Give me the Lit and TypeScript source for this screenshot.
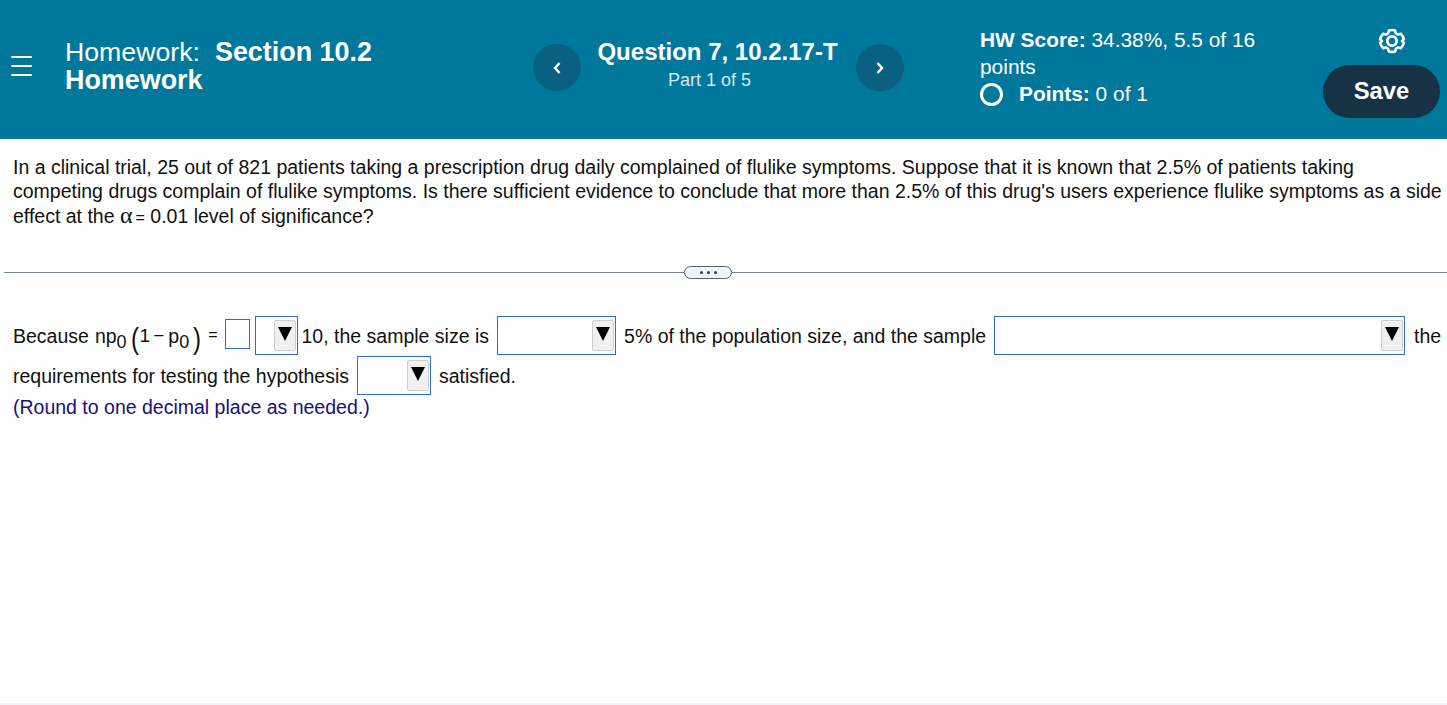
import { LitElement, html, css } from 'lit';
import { customElement } from 'lit/decorators.js';

@customElement('drop-down')
class DropDown extends LitElement {
  static properties = { width: { type: Number } };
  declare width: number;

  static styles = css`
    :host {
      display: block;
      flex: none;
      margin-bottom: 2px;
    }
    .box {
      box-sizing: border-box;
      height: 39px;
      border: 1px solid #2b6cd4;
      background: #fff;
      display: flex;
      justify-content: flex-end;
      padding: 3px 1px 0 0;
    }
    .btn {
      box-sizing: border-box;
      width: 22px;
      height: 31px;
      border: 1px solid #cfcfcf;
      border-radius: 2px;
      background: #f0f0f0;
      display: flex;
      justify-content: center;
      padding-top: 6px;
    }
    svg {
      display: block;
    }
  `;

  render() {
    return html`
      <div class="box" style="width:${this.width}px">
        <div class="btn">
          <svg width="14" height="14" viewBox="0 0 14 14"><path d="M0 0H14L7 14Z" fill="#000" /></svg>
        </div>
      </div>
    `;
  }
}

@customElement('app-root')
class AppRoot extends LitElement {
  static styles = css`
    :host {
      display: block;
      height: 705px;
      overflow: hidden;
      font-family: 'Liberation Sans', Arial, sans-serif;
      color: #111;
      background: #fff;
      box-shadow: inset 0 -2px 0 #f1f3f5;
    }
    header {
      height: 139px;
      background: #00789c;
      color: #fff;
      display: flex;
      box-sizing: border-box;
    }
    .menu {
      width: 65px;
      flex: none;
      padding: 56px 0 0 11px;
      box-sizing: border-box;
    }
    .menu span {
      display: block;
      width: 21px;
      height: 2px;
      background: #fff;
      margin-bottom: 7px;
      border-radius: 1px;
    }
    .title {
      width: 468px;
      flex: none;
      padding-top: 39px;
      font-size: 26.7px;
      line-height: 27.5px;
    }
    .title b {
      font-size: 26.9px;
      margin-left: 15px;
    }
    .title b.second {
      margin-left: 0;
    }
    .nav {
      width: 371px;
      flex: none;
      display: flex;
      align-items: flex-start;
      padding-top: 44px;
      box-sizing: border-box;
    }
    .circle {
      width: 48px;
      height: 47px;
      flex: none;
      border-radius: 50%;
      background: #0a6080;
      display: flex;
      align-items: center;
      justify-content: center;
    }
    .question {
      flex: 1;
      text-align: center;
      margin-top: -7px;
    }
    .question b {
      display: block;
      font-size: 24px;
      line-height: 30px;
      margin-right: 2px;
    }
    .question span {
      display: block;
      font-size: 18px;
      line-height: 26px;
      color: #d4e8ef;
      margin-right: 18px;
    }
    .score {
      margin-left: 76px;
      width: 343px;
      flex: none;
      padding-top: 26px;
      font-size: 20.9px;
      line-height: 27px;
    }
    .score .text {
      width: 290px;
    }
    .points {
      display: flex;
      align-items: center;
      gap: 16px;
    }
    .ring {
      width: 23px;
      height: 23px;
      box-sizing: border-box;
      border: 3px solid #fff;
      border-radius: 50%;
      margin-top: 1px;
    }
    .actions {
      flex: none;
      width: 117px;
      display: flex;
      flex-direction: column;
      padding-top: 27px;
    }
    .gear {
      margin-left: 55px;
      display: block;
    }
    .save {
      margin-top: 10px;
      width: 117px;
      height: 53px;
      border-radius: 27px;
      background: #173245;
      font-size: 23.8px;
      font-weight: 700;
      display: flex;
      align-items: center;
      justify-content: center;
      padding-bottom: 1px;
      box-sizing: border-box;
    }
    .prompt {
      padding: 15.8px 0 0 13px;
      font-size: 19.5px;
      line-height: 24.5px;
      white-space: nowrap;
    }
    .alpha {
      font-family: 'Liberation Serif', serif;
      font-size: 24px;
      line-height: 0;
    }
    .tight {
      font-size: 16px;
      margin-left: 3px;
    }
    .divider {
      margin: 36.200px 0 0 4px;
      display: flex;
      align-items: center;
    }
    .divider i {
      flex: 1;
      height: 1px;
      background: #77839a;
    }
    .divider i.left {
      flex: none;
      width: 680px;
    }
    .pill {
      box-sizing: border-box;
      width: 48px;
      height: 13px;
      border: 1px solid #56657a;
      border-radius: 7px;
      background: #f1f3f6;
      display: flex;
      align-items: center;
      justify-content: center;
      gap: 4px;
    }
    .pill span {
      width: 3px;
      height: 3px;
      border-radius: 50%;
      background: #333e4e;
    }
    .answer {
      padding: 37px 0 0 13px;
      font-size: 19.5px;
      white-space: nowrap;
    }
    .line {
      display: flex;
      align-items: center;
      height: 40px;
    }
    .expr {
      display: flex;
      align-items: center;
      margin-left: 6px;
    }
    sub {
      font-size: 18px;
      line-height: 0;
      vertical-align: -5px;
    }
    .paren {
      font-size: 30px;
      line-height: 30px;
      margin: 6px 0 0 3px;
      transform: scaleX(0.8);
    }
    .minus {
      margin: 0 4px 0 3px;
    }
    .small {
      font-size: 19px;
    }
    .eq {
      font-size: 16px;
      margin: -2px 7px 0 6px;
    }
    .input {
      box-sizing: border-box;
      flex: none;
      width: 25px;
      height: 30px;
      border: 1px solid #2b6cd4;
      margin: 0 5px 4px 0;
    }
    .after-one {
      margin: 0 8px 0 4px;
    }
    .after-two {
      margin: 0 8px;
    }
    .after-three {
      margin-left: 9px;
    }
    .gap {
      margin-left: 8px;
      margin-right: 8px;
    }
    .note {
      color: #1a0f7c;
      line-height: 24px;
      margin-top: -1px;
    }
  `;

  render() {
    return html`
      <header>
        <div class="menu"><span></span><span></span><span></span></div>
        <div class="title">Homework:<b>Section 10.2</b><br /><b class="second">Homework</b></div>
        <div class="nav">
          <div class="circle">
            <svg width="10" height="12" viewBox="0 0 10 12"><path d="M7.500 1L3 6l4.500 5" fill="none" stroke="#fff" stroke-width="2.400" /></svg>
          </div>
          <div class="question">
            <b>Question 7, 10.2.17-T</b>
            <span>Part 1 of 5</span>
          </div>
          <div class="circle">
            <svg width="10" height="12" viewBox="0 0 10 12"><path d="M2.500 1L7 6l-4.500 5" fill="none" stroke="#fff" stroke-width="2.400" /></svg>
          </div>
        </div>
        <div class="score">
          <div class="text"><b>HW Score:</b> 34.38%, 5.5 of 16 points</div>
          <div class="points"><span class="ring"></span><span><b>Points:</b> 0 of 1</span></div>
        </div>
        <div class="actions">
          <svg class="gear" width="28" height="28" viewBox="0 0 24 24" fill="none" stroke="#fff" stroke-width="2.400" stroke-linejoin="round">
            <circle cx="12" cy="12" r="4" />
            <path d="M12 1.500c1 0 2 .2 3 .5l.6 2.600 2.200 1.300 2.500-.8a10.500 10.500 0 0 1 3 5.200L21.400 12l1.900 1.700a10.500 10.500 0 0 1-3 5.200l-2.500-.8-2.200 1.300-.6 2.600a10.500 10.500 0 0 1-6 0l-.6-2.600-2.200-1.300-2.500.8a10.500 10.500 0 0 1-3-5.200L2.600 12 .7 10.300a10.500 10.500 0 0 1 3-5.200l2.500.8 2.200-1.300L9 2c1-.3 2-.5 3-.5z" transform="translate(1.200 1.200) scale(.9)" />
          </svg>
          <div class="save">Save</div>
        </div>
      </header>
      <div class="prompt">
        In a clinical trial, 25 out of 821 patients taking a prescription drug daily complained of flulike symptoms. Suppose that it is known that 2.5% of patients taking<br />
        competing drugs complain of flulike symptoms. Is there sufficient evidence to conclude that more than 2.5% of this drug's users experience flulike symptoms as a side<br />
        effect at the <span class="alpha">α</span><span class="tight">=</span> 0.01 level of significance?
      </div>
      <div class="divider">
        <i class="left"></i>
        <div class="pill"><span></span><span></span><span></span></div>
        <i></i>
      </div>
      <div class="answer">
        <div class="line">
          Because
          <span class="expr">
            <span>np<sub>0</sub></span>
            <span class="paren">(</span><span class="small">1</span><span class="small minus">−</span><span>p<sub>0</sub></span><span class="paren">)</span>
            <span class="eq">=</span>
          </span>
          <span class="input"></span>
          <drop-down width="43"></drop-down>
          <span class="after-one">10, the sample size is</span>
          <drop-down width="119"></drop-down>
          <span class="after-two">5% of the population size, and the sample</span>
          <drop-down width="411"></drop-down>
          <span class="after-three">the</span>
        </div>
        <div class="line">
          requirements for testing the hypothesis
          <drop-down class="gap" width="74"></drop-down>
          satisfied.
        </div>
        <div class="note">(Round to one decimal place as needed.)</div>
      </div>
    `;
  }
}
